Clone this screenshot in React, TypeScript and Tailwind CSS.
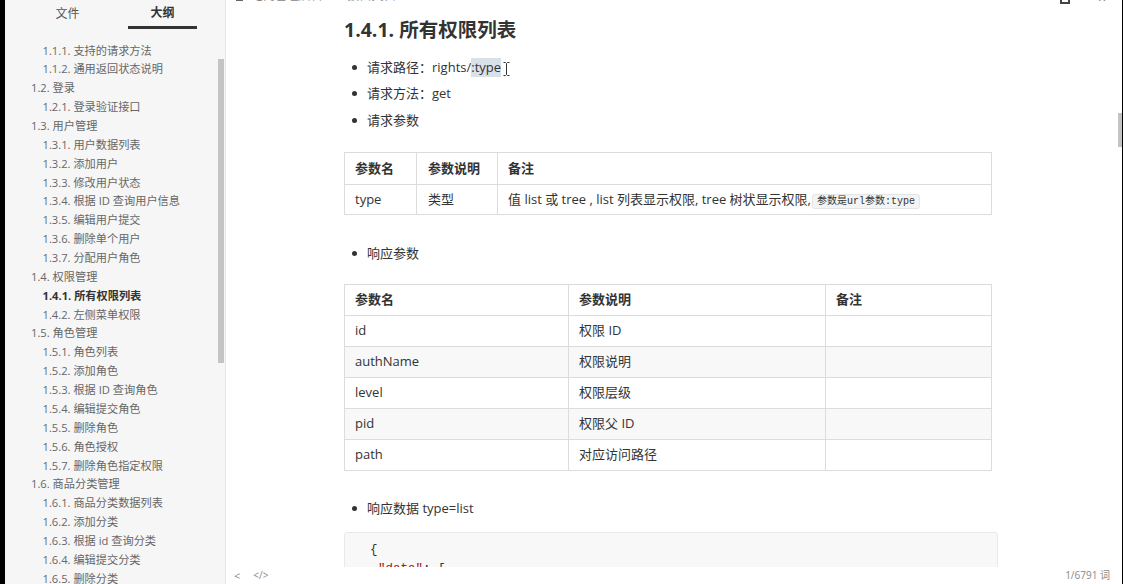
type OutlineItem = {
  label: string;
  level: 2 | 3;
  active?: boolean;
};

const outline: OutlineItem[] = [
  { label: "1.1.1. 支持的请求方法", level: 3 },
  { label: "1.1.2. 通用返回状态说明", level: 3 },
  { label: "1.2. 登录", level: 2 },
  { label: "1.2.1. 登录验证接口", level: 3 },
  { label: "1.3. 用户管理", level: 2 },
  { label: "1.3.1. 用户数据列表", level: 3 },
  { label: "1.3.2. 添加用户", level: 3 },
  { label: "1.3.3. 修改用户状态", level: 3 },
  { label: "1.3.4. 根据 ID 查询用户信息", level: 3 },
  { label: "1.3.5. 编辑用户提交", level: 3 },
  { label: "1.3.6. 删除单个用户", level: 3 },
  { label: "1.3.7. 分配用户角色", level: 3 },
  { label: "1.4. 权限管理", level: 2 },
  { label: "1.4.1. 所有权限列表", level: 3, active: true },
  { label: "1.4.2. 左侧菜单权限", level: 3 },
  { label: "1.5. 角色管理", level: 2 },
  { label: "1.5.1. 角色列表", level: 3 },
  { label: "1.5.2. 添加角色", level: 3 },
  { label: "1.5.3. 根据 ID 查询角色", level: 3 },
  { label: "1.5.4. 编辑提交角色", level: 3 },
  { label: "1.5.5. 删除角色", level: 3 },
  { label: "1.5.6. 角色授权", level: 3 },
  { label: "1.5.7. 删除角色指定权限", level: 3 },
  { label: "1.6. 商品分类管理", level: 2 },
  { label: "1.6.1. 商品分类数据列表", level: 3 },
  { label: "1.6.2. 添加分类", level: 3 },
  { label: "1.6.3. 根据 id 查询分类", level: 3 },
  { label: "1.6.4. 编辑提交分类", level: 3 },
  { label: "1.6.5. 删除分类", level: 3 },
];

const responseRows = [
  { name: "id", desc: "权限 ID" },
  { name: "authName", desc: "权限说明" },
  { name: "level", desc: "权限层级" },
  { name: "pid", desc: "权限父 ID" },
  { name: "path", desc: "对应访问路径" },
];

const FONT = "font-['Open_Sans','Noto_Sans_CJK_SC',sans-serif]";
const MONO = "font-['Liberation_Mono','Noto_Sans_CJK_SC',monospace]";

function Sidebar() {
  return (
    <aside className="relative w-[220px] h-full bg-[#f6f6f6] flex flex-col overflow-hidden">
      {/* tabs */}
      <div className="h-[30px] flex pl-[25px] gap-[23px] text-[12px] text-[#555]">
        <div className="w-[75px] flex items-center justify-center h-[28px]">文件</div>
        <div className="w-[69px] flex flex-col items-center">
          <div className="h-[26px] flex items-center font-bold text-[#333]">大纲</div>
          <div className="h-[3px] w-full bg-[#333]" />
        </div>
      </div>
      {/* outline */}
      <div className="pt-[12.6px] flex flex-col">
        {outline.map((item) => (
          <div
            key={item.label}
            className={`h-[18.86px] leading-[18.86px] whitespace-nowrap text-[11.2px] ${
              item.level === 2 ? "pl-[26px]" : "pl-[37.5px]"
            } ${item.active ? "font-bold text-[#333]" : "text-[#666]"}`}
          >
            {item.label}
          </div>
        ))}
      </div>
      {/* scrollbar */}
      <div className="absolute right-[1px] top-[59px] w-[6px] h-[304px] bg-[#c4c4c4]" />
    </aside>
  );
}

function Bullet({ children }: { children: React.ReactNode }) {
  return (
    <li className="h-[26.5px] flex items-center">
      <span className="w-[5px] h-[5px] rounded-full bg-[#333] ml-[8px] mr-[10px]" />
      <span>{children}</span>
    </li>
  );
}

function IBeam() {
  return (
    <svg width="7" height="14" viewBox="0 0 7 14" className="ml-[2px] mt-[3px]">
      <path d="M0.5 0.5h2l1 1 1-1h2M3.5 1.5v11M0.5 13.5h2l1-1 1 1h2" fill="none" stroke="#333" strokeWidth="1" />
    </svg>
  );
}

function Main() {
  return (
    <main className="relative flex-1 h-full bg-white border-l border-[#e6e6e6] flex flex-col overflow-hidden">
      {/* title strip, mostly scrolled off */}
      <div className="h-[6px] overflow-hidden flex items-end px-[10px] text-[12px] text-[#888]">
        <div className="flex items-center gap-[8px] mb-[2px] h-[16px]">
          <span className="w-[7px] h-[1px] bg-[#666] mt-[8px]" />
          <span>电商管理后台 API 接口文档.md</span>
        </div>
        <div className="ml-auto flex items-center gap-[28px] mb-[1px] h-[16px] mr-[6px]">
          <span className="w-[10px] h-[10px] border-2 border-[#444] mt-[4px]" />
          <span className="text-[#555] text-[14px]">×</span>
        </div>
      </div>

      <div className="flex-1 overflow-hidden">
        <div className={`w-[654px] ml-[118px] text-[13px] text-[#333] ${FONT}`}>
          <h1 className="mt-[10px] h-[28px] leading-[28px] text-[19.5px] font-bold text-[#333]">
            1.4.1. 所有权限列表
          </h1>

          <ul className="mt-[10px]">
            <Bullet>
              <span className="flex items-center">
                请求路径：rights/<span className="bg-[#d9e1e8]">:type</span>
                <IBeam />
              </span>
            </Bullet>
            <Bullet>请求方法：get</Bullet>
            <Bullet>请求参数</Bullet>
          </ul>

          <table className="mt-[18.5px] w-[648px] border-collapse border border-[#dcdcdc]">
            <thead>
              <tr className="h-[32px] text-left">
                <th className="w-[72px] px-[10px] border border-[#dcdcdc] font-bold">参数名</th>
                <th className="w-[81px] px-[11px] border border-[#dcdcdc] font-bold">参数说明</th>
                <th className="px-[10px] border border-[#dcdcdc] font-bold">备注</th>
              </tr>
            </thead>
            <tbody>
              <tr className="h-[30px]">
                <td className="px-[10px] border border-[#dcdcdc]">type</td>
                <td className="px-[11px] border border-[#dcdcdc]">类型</td>
                <td className="px-[10px] border border-[#dcdcdc] whitespace-nowrap">
                  值 list 或 tree , list 列表显示权限, tree 树状显示权限,
                  <span className={`ml-[1px] px-[4px] py-[1px] text-[10px] bg-[#f3f4f4] border border-[#e3e5e7] rounded-[3px] ${MONO}`}>
                    参数是url参数:type
                  </span>
                </td>
              </tr>
            </tbody>
          </table>

          <ul className="mt-[25px]">
            <Bullet>响应参数</Bullet>
          </ul>

          <table className="mt-[17px] w-[648px] border-collapse border border-[#dcdcdc]">
            <thead>
              <tr className="h-[31px] text-left">
                <th className="w-[224px] px-[10px] border border-[#dcdcdc] font-bold">参数名</th>
                <th className="w-[257px] px-[10px] border border-[#dcdcdc] font-bold">参数说明</th>
                <th className="px-[10px] border border-[#dcdcdc] font-bold">备注</th>
              </tr>
            </thead>
            <tbody>
              {responseRows.map((row, i) => (
                <tr key={row.name} className={`h-[31px] ${i % 2 === 1 ? "bg-[#f8f8f8]" : "bg-white"}`}>
                  <td className="px-[10px] border border-[#dcdcdc]">{row.name}</td>
                  <td className="px-[10px] border border-[#dcdcdc]">{row.desc}</td>
                  <td className="px-[10px] border border-[#dcdcdc]"></td>
                </tr>
              ))}
            </tbody>
          </table>

          <ul className="mt-[25px]">
            <Bullet>响应数据 type=list</Bullet>
          </ul>

          <div className={`mt-[10px] w-[654px] bg-[#f8f8f8] border border-[#e7eaed] rounded-[3px] pt-[8px] pl-[25px] text-[12.5px] leading-[19px] text-[#333] ${MONO}`}>
            <div>{"{"}</div>
            <div className="pl-[8px]">
              <span className="text-[#a11]">"data"</span>: [
            </div>
            <div className="pl-[16px]">{"{"}</div>
          </div>
        </div>
      </div>

      {/* footer */}
      <div className={`h-[17px] flex items-center bg-white px-[8px] text-[10px] text-[#888] ${FONT}`}>
        <span className="text-[11px] leading-none">&lt;</span>
        <span className="ml-[13px] text-[10px]">&lt;/&gt;</span>
        <span className="ml-auto mr-[4px]">1/6791 词</span>
      </div>

      {/* scrollbar */}
      <div className="absolute right-0 top-[113px] w-[4px] h-[34px] bg-[#c4c4c4]" />
    </main>
  );
}

export default function App() {
  return (
    <div className={`w-[1123px] h-[584px] flex bg-black overflow-hidden ${FONT}`}>
      <div className="w-[5px] h-full bg-black" />
      <Sidebar />
      <Main />
      <div className="w-[1px] h-full bg-black" />
    </div>
  );
}
